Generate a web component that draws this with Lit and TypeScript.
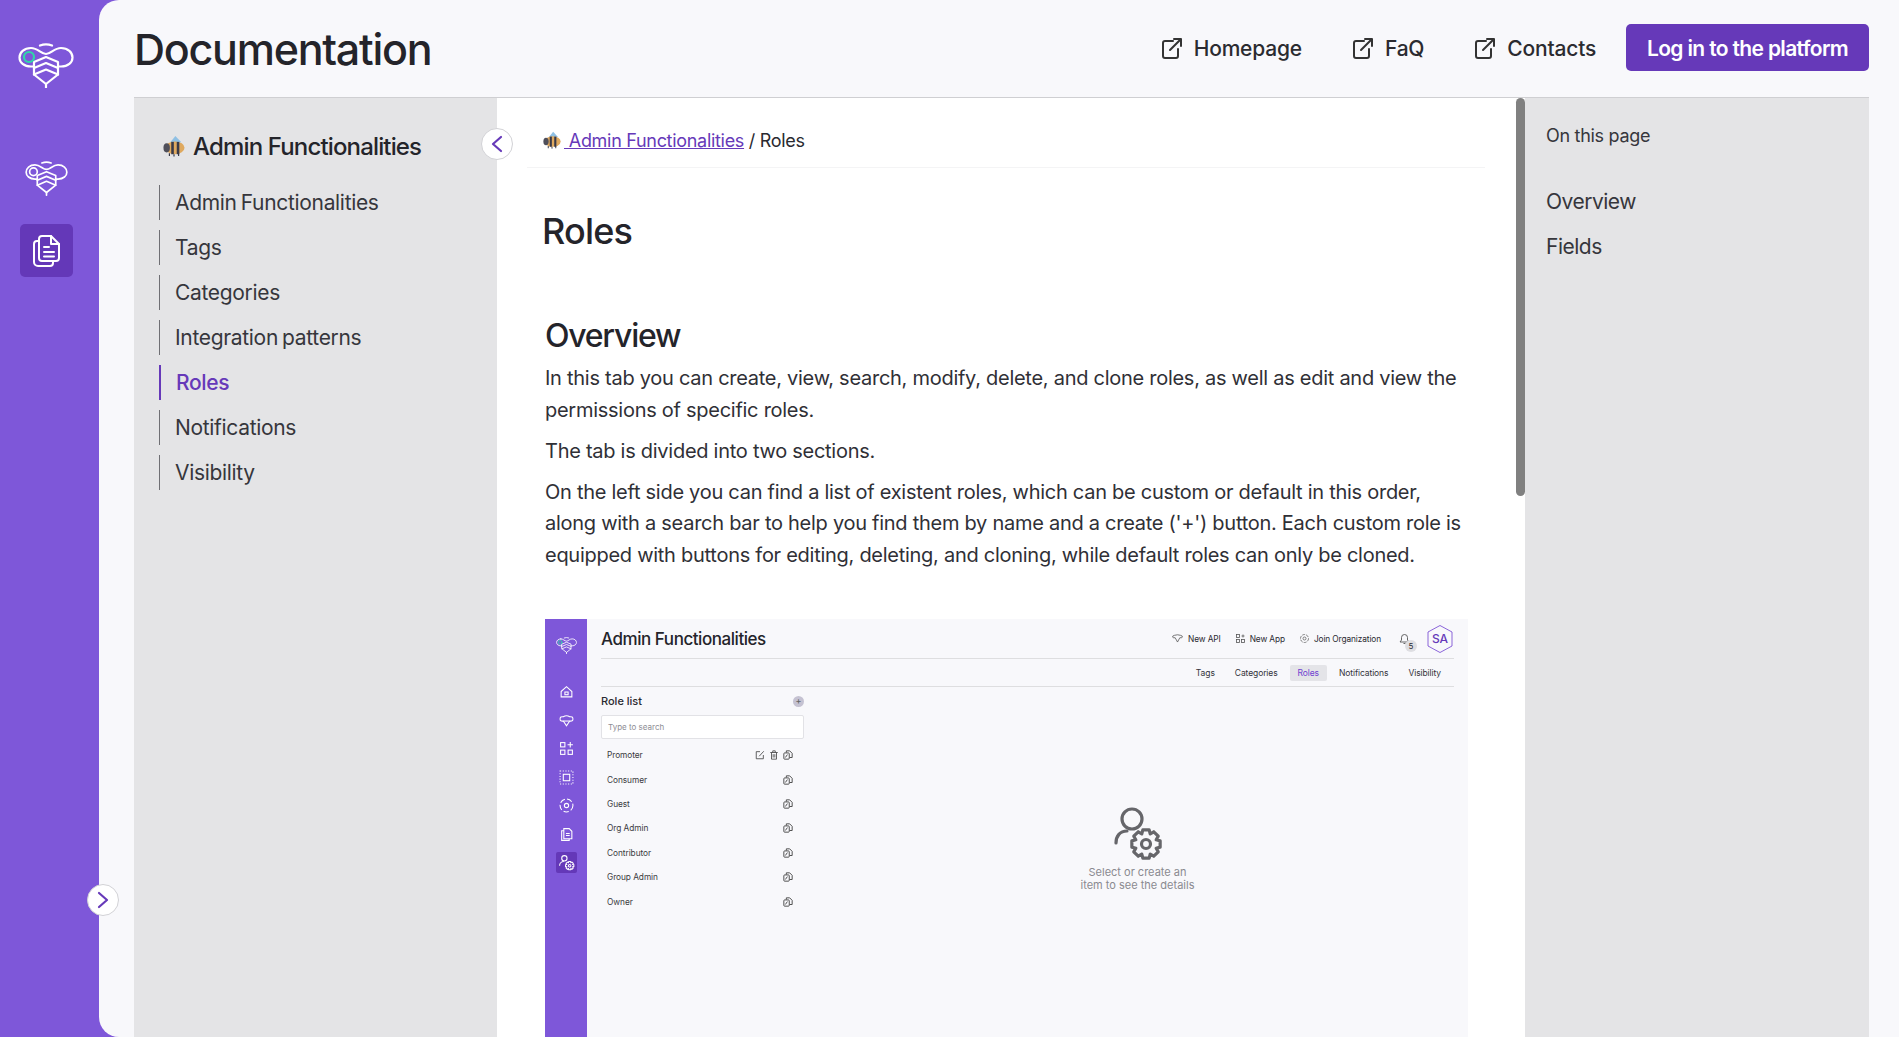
import { LitElement, html, css, svg } from "lit";
import { customElement } from "lit/decorators.js";

const bee = (w: number, eye: string) => html`<svg class="bee" width=${w} viewBox="0 0 56 45" fill="none" stroke="#fff" stroke-width="2.2" stroke-linejoin="round" stroke-linecap="round">
  <path d="M22 2.5Q28 .2 34 2.5" />
  <path d="M13 5C6 5 1.5 9.5 1.5 14.500C1.5 19.500 6 23.500 13 23.500H43C50 23.500 54.500 19.500 54.500 14.500C54.500 9.500 50 5 43 5C36 5 33 11 28 11C23 11 20 5 13 5Z" />
  <path d="M16 19L28 14L40 19V31.500L28 41L16 31.500Z" fill="#7e57d9" />
  <path d="M16 25L28 20L40 25M16 31.500L28 26.500L40 31.500M28 41V44.500" />
  <circle cx="11" cy="14" r="5" stroke=${eye} />
</svg>`;

const ext = html`<svg class="ext" width="24" height="24" viewBox="0 0 24 24" fill="none" stroke="#333" stroke-width="2" stroke-linecap="round" stroke-linejoin="round">
  <path d="M13 5H5a2 2 0 0 0-2 2v13a2 2 0 0 0 2 2h11a2 2 0 0 0 2-2v-7" />
  <path d="M10 14L21 3M14 3h7v7" />
</svg>`;

const beeEmoji = (s: number) => html`<svg width=${s} height=${s} viewBox="0 0 24 24">
  <path d="M8 8L13.500 1L20 8Z" fill="#8fc0e4" />
  <ellipse cx="13" cy="14" rx="10.500" ry="7" fill="#dfa95f" />
  <rect x="9" y="7.500" width="2.800" height="13.500" fill="#3a3a48" />
  <rect x="15" y="7.500" width="2.800" height="13.500" fill="#3a3a48" />
  <ellipse cx="4" cy="14" rx="3.500" ry="5" fill="#4f4f5a" />
  <path d="M7 20v3M12 21v2.500M17 20v3" stroke="#3a3a48" stroke-width="1.300" />
</svg>`;

const copy = html`<svg width="10" height="10" viewBox="0 0 12 12" fill="none" stroke="#444" stroke-width="1.100">
  <rect x="1" y="3.500" width="6.500" height="7.500" rx="1" />
  <path d="M4 3V1h4l3 3v5H8" />
  <path d="M2.800 9l2.500-3.500" />
</svg>`;

// outline of a toothed gear, computed so the teeth stay even
const gearPath = (cx: number, cy: number, outer: number, inner: number, teeth: number) => {
  const pts: string[] = [];
  const step = (Math.PI * 2) / teeth;
  for (let i = 0; i < teeth; i++) {
    const a = i * step - Math.PI / 2;
    [
      [inner, -0.5],
      [outer, -0.28],
      [outer, 0.28],
      [inner, 0.5],
    ].forEach(([r, k]) => {
      const t = a + k * step;
      pts.push(`${(cx + r * Math.cos(t)).toFixed(2)} ${(cy + r * Math.sin(t)).toFixed(2)}`);
    });
  }
  return `M${pts.join("L")}Z`;
};

const miniIcons = [
  svg`<path d="M2 7L7 2.500L12 7V12H2Z" /><rect x="5.500" y="7.500" width="3" height="2.500" />`,
  svg`<path d="M4 3.500Q7 1.500 10 3.500Q13 3 13 5.500Q13 8 10 7.500L7 12L4 7.500Q1 8 1 5.500Q1 3 4 3.500Z" /><path d="M4 7.500h6" />`,
  svg`<rect x="1.500" y="1.500" width="4" height="4" /><rect x="1.500" y="8.500" width="4" height="4" /><rect x="8.500" y="8.500" width="4" height="4" /><path d="M10.500 1v5M8 3.500h5" />`,
  svg`<rect x="1" y="1" width="12" height="12" stroke-dasharray="1 1.500" /><rect x="4" y="4" width="6" height="6" />`,
  svg`<circle cx="7" cy="7" r="6" stroke-dasharray="5 2" /><circle cx="7" cy="7" r="2" />`,
  svg`<path d="M4.500 1.500h5l2.500 2.500v7H4.500Z" /><path d="M4.500 3.500H2.500V12.500H9.500V11" /><path d="M6.500 6h3.500M6.500 8h3.500" />`,
];

const roles = ["Promoter", "Consumer", "Guest", "Org Admin", "Contributor", "Group Admin", "Owner"];
const navItems = ["Admin Functionalities", "Tags", "Categories", "Integration patterns", "Roles", "Notifications", "Visibility"];

@customElement("app-root")
export class AppRoot extends LitElement {
  static styles = css`
    :host {
      display: flex;
      height: 100vh;
      overflow: hidden;
      background: #7e57d9;
      font-family: Inter, "Open Sans", sans-serif;
      color: #2a2a30;
      position: relative;
    }
    .rail {
      width: 99px;
      flex: none;
      display: flex;
      flex-direction: column;
      align-items: center;
      padding-top: 43px;
      box-sizing: border-box;
    }
    .rail .logo { width: 56px; margin-right: 7px; }
    .rail .apis { margin-top: 73px; margin-right: 7px; height: 35px; }
    .rail .docs {
      width: 53px;
      height: 53px;
      margin-top: 28px;
      margin-right: 7px;
      background: #6438b8;
      border-radius: 5px;
      display: flex;
      align-items: center;
      justify-content: center;
    }
    .bee { display: block; }
    .main {
      flex: 1;
      min-width: 0;
      background: #f8f8fb;
      border-radius: 20px 0 0 20px;
      padding: 0 30px 0 35px;
      display: flex;
      flex-direction: column;
    }
    header {
      height: 98px;
      flex: none;
      box-sizing: border-box;
      border-bottom: 1px solid #cfcfd2;
      display: flex;
      align-items: center;
      padding-top: 1px;
    }
    header h1 {
      margin: 0;
      font-size: 43px;
      font-weight: 500;
      letter-spacing: -1.25px;
      flex: 1;
      color: #24242a;
    }
    .link {
      display: flex;
      align-items: center;
      gap: 10px;
      margin-top: -2px;
      font-size: 21px;
      font-weight: 500;
      letter-spacing: -0.2px;
      margin-right: 49px;
      color: #2b2b30;
    }
    .link:nth-of-type(3) { margin-right: 30px; }
    .ext { flex: none; }
    .login {
      width: 243px;
      height: 47px;
      margin-top: -3px;
      padding-top: 1px;
      box-sizing: border-box;
      background: #6639b9;
      color: #fff;
      border-radius: 5px;
      font-size: 21px;
      font-weight: 600;
      letter-spacing: -0.65px;
      display: flex;
      align-items: center;
      justify-content: center;
    }
    .body { flex: 1; display: flex; min-height: 0; }
    .nav {
      width: 363px;
      flex: none;
      background: #e4e4e6;
      padding: 31px 0 0 25px;
      box-sizing: border-box;
    }
    .nav-title {
      display: flex;
      align-items: center;
      gap: 8px;
      font-size: 24px;
      font-weight: 500;
      letter-spacing: -0.85px;
      height: 34px;
      margin-left: 4px;
      margin-bottom: 22px;
      color: #24242a;
    }
    .nav-item {
      height: 35px;
      margin-bottom: 10px;
      border-left: 1px solid #6f6f74;
      padding-left: 15px;
      display: flex;
      align-items: center;
      font-size: 21px;
      letter-spacing: -0.32px;
      word-spacing: -1.500px;
      color: #36363c;
    }
    .nav-item.on {
      border-left: 2px solid #6639b9;
      padding-left: 15px;
      color: #6639b9;
      font-weight: 500;
    }
    .content {
      flex: 1;
      min-width: 0;
      background: #fff;
      padding: 0 31px 0 30px;
      overflow: hidden;
    }
    .crumb {
      height: 70px;
      box-sizing: border-box;
      border-bottom: 1px solid #f4f4f5;
      padding: 15px 0 0 16px;
      display: flex;
      align-items: center;
      font-size: 18px;
      letter-spacing: -0.3px;
      white-space: pre;
    }
    .crumb a {
      color: #6639b9;
      text-decoration: underline;
      display: flex;
      align-items: center;
      gap: 3px;
    }
    .content h2 {
      margin: 41px 0 0 15px;
      font-size: 36px;
      line-height: 44px;
      font-weight: 500;
      letter-spacing: -0.8px;
      color: #24242a;
    }
    .content h3 {
      margin: 63px 0 7px 18px;
      font-size: 32px;
      line-height: 40px;
      font-weight: 500;
      letter-spacing: -1.25px;
      color: #24242a;
    }
    .content p {
      margin: 0 0 9.500px 18px;
      width: 925px;
      font-size: 20px;
      line-height: 31.500px;
      letter-spacing: -0.27px;
      color: #303036;
    }
    .shot {
      margin: 48px 0 0 18px;
      width: 923px;
      height: 520px;
      display: flex;
      background: #f8f8fb;
    }
    .shot-rail {
      width: 42px;
      flex: none;
      background: #7e57d9;
      display: flex;
      flex-direction: column;
      align-items: center;
      padding-top: 16px;
      box-sizing: border-box;
    }
    .shot-rail .mini {
      width: 21px;
      height: 21px;
      margin-bottom: 7.500px;
      display: flex;
      align-items: center;
      justify-content: center;
      border-radius: 2px;
    }
    .shot-rail .first { margin-bottom: 25px; }
    .shot-rail .mini.on { background: #6438b8; }
    .shot-main { flex: 1; min-width: 0; padding: 0 14px; }
    .shot-top {
      height: 39px;
      border-bottom: 1px solid #dedee0;
      display: flex;
      align-items: center;
      font-size: 8.300px;
      letter-spacing: -0.1px;
      gap: 15px;
    }
    .shot-top b {
      flex: 1;
      font-size: 17px;
      font-weight: 500;
      letter-spacing: -0.45px;
      color: #24242a;
    }
    .shot-top span { display: flex; align-items: center; gap: 5px; }
    .bell { position: relative; margin-left: 3px; margin-right: 2px; display: flex; }
    .badge {
      position: absolute;
      left: 6px;
      top: 7px;
      width: 12px;
      height: 12px;
      border-radius: 50%;
      background: #dedee2;
      font-size: 8px;
      display: flex;
      align-items: center;
      justify-content: center;
    }
    .hex { position: relative; width: 26px; height: 28px; margin-right: 1px; }
    .hex i {
      position: absolute;
      inset: 0;
      display: flex;
      align-items: center;
      justify-content: center;
      font-style: normal;
      font-size: 12px;
      font-weight: 500;
      color: #6639b9;
    }
    .tabs {
      height: 28px;
      box-sizing: border-box;
      border-bottom: 1px solid #dedee0;
      display: flex;
      align-items: center;
      justify-content: flex-end;
      padding: 0 13px 0 0;
      font-size: 8.500px;
      letter-spacing: -0.1px;
      color: #33333a;
      gap: 20px;
    }
    .tabs span.on {
      background: #e4e4e8;
      color: #6f3fd0;
      border-radius: 2px;
      padding: 3px 8px;
      margin: 0 -8px;
    }
    .shot-cols { display: flex; }
    .roles { width: 203px; flex: none; }
    .roles-head {
      height: 28px;
      display: flex;
      align-items: center;
      justify-content: space-between;
      font-size: 11px;
      font-weight: 500;
    }
    .plus {
      width: 11px;
      height: 11px;
      border-radius: 50%;
      background: #c5c2d2;
      color: #666;
      font-size: 9px;
      line-height: 10px;
      text-align: center;
    }
    .search {
      height: 24px;
      box-sizing: border-box;
      background: #fff;
      border: 1px solid #e2e2e6;
      border-radius: 2px;
      padding-left: 6px;
      display: flex;
      align-items: center;
      font-size: 8px;
      color: #8d8d94;
      margin-bottom: 4px;
    }
    .role {
      height: 24.400px;
      display: flex;
      align-items: center;
      padding: 0 11px 0 6px;
      gap: 4px;
      font-size: 8.300px;
      letter-spacing: -0.05px;
      color: #3a3a40;
    }
    .role span { flex: 1; }
    .empty {
      flex: 1;
      display: flex;
      flex-direction: column;
      align-items: center;
      padding-top: 120px;
      margin-left: 17px;
      color: #8a8a90;
      font-size: 11px;
      line-height: 12.500px;
      text-align: center;
    }
    .empty svg { margin-bottom: 6px; }
    .scroll {
      width: 9px;
      flex: none;
      background: #fff;
    }
    .scroll div {
      height: 398px;
      background: #808080;
      border-radius: 5px;
    }
    .toc {
      width: 344px;
      flex: none;
      background: #e4e4e6;
      padding: 26px 0 0 21px;
      box-sizing: border-box;
      font-size: 21px;
      letter-spacing: -0.5px;
      color: #36363c;
    }
    .toc small {
      display: block;
      font-size: 18px;
      letter-spacing: -0.3px;
      line-height: 24px;
      margin-bottom: 40px;
    }
    .toc div { height: 45px; line-height: 28px; }
    .chev {
      position: absolute;
      width: 32px;
      height: 32px;
      box-sizing: border-box;
      border-radius: 50%;
      background: #fff;
      border: 1px solid #d2d2d6;
      display: flex;
      align-items: center;
      justify-content: center;
    }
    .chev.open { left: 87px; top: 884px; }
    .chev.close { left: 481px; top: 128px; }
  `;

  render() {
    return html`
      <aside class="rail">
        <div class="logo">${bee(56, "#2fd8a8")}</div>
        <div class="apis">${bee(43, "#fff")}</div>
        <div class="docs">
          <svg width="27" height="32" viewBox="0 0 27 32" fill="none" stroke="#fff" stroke-width="2" stroke-linejoin="round" stroke-linecap="round">
            <path d="M6 6H4a3 3 0 0 0-3 3v18a4 4 0 0 0 4 4h12a3 3 0 0 0 3-3v-2" />
            <path d="M9 1h9l8 8v14a3 3 0 0 1-3 3H9a3 3 0 0 1-3-3V4a3 3 0 0 1 3-3Z" />
            <path d="M18 1v8h8M11 12h5M11 17h10M11 21.500h10" />
          </svg>
        </div>
      </aside>
      <div class="main">
        <header>
          <h1>Documentation</h1>
          <div class="link">${ext}Homepage</div>
          <div class="link">${ext}FaQ</div>
          <div class="link">${ext}Contacts</div>
          <div class="login">Log in to the platform</div>
        </header>
        <div class="body">
          <nav class="nav">
            <div class="nav-title">${beeEmoji(22)}Admin Functionalities</div>
            ${navItems.map((n) => html`<div class="nav-item ${n === "Roles" ? "on" : ""}">${n}</div>`)}
          </nav>
          <main class="content">
            <div class="crumb"><a>${beeEmoji(18)} Admin Functionalities</a> / Roles</div>
            <h2>Roles</h2>
            <h3>Overview</h3>
            <p>In this tab you can create, view, search, modify, delete, and clone roles, as well as edit and view the permissions of specific roles.</p>
            <p>The tab is divided into two sections.</p>
            <p>On the left side you can find a list of existent roles, which can be custom or default in this order, along with a search bar to help you find them by name and a create ('+') button. Each custom role is equipped with buttons for editing, deleting, and cloning, while default roles can only be cloned.</p>
            ${this.renderShot()}
          </main>
          <div class="scroll"><div></div></div>
          <aside class="toc">
            <small>On this page</small>
            <div>Overview</div>
            <div>Fields</div>
          </aside>
        </div>
      </div>
      <div class="chev open">
        <svg width="14" height="18" viewBox="0 0 14 18" fill="none" stroke="#6639b9" stroke-width="2.200" stroke-linecap="round" stroke-linejoin="round"><path d="M3 2l8 7-8 7" /></svg>
      </div>
      <div class="chev close">
        <svg width="14" height="18" viewBox="0 0 14 18" fill="none" stroke="#6639b9" stroke-width="2.200" stroke-linecap="round" stroke-linejoin="round"><path d="M11 2l-8 7 8 7" /></svg>
      </div>
    `;
  }

  renderShot() {
    return html`<div class="shot">
      <div class="shot-rail">
        <div class="mini first">${bee(23, "#2fd8a8")}</div>
        ${miniIcons.map((i) => html`<div class="mini">
          <svg width="15" height="15" viewBox="0 0 14 14" fill="none" stroke="#fff" stroke-width="1">${i}</svg>
        </div>`)}
        <div class="mini on">
          <svg width="17" height="17" viewBox="0 0 16 16" fill="none" stroke="#fff" stroke-width="1"><circle cx="6" cy="4" r="2.500" /><path d="M1.500 11c0-2.500 2-4 4-4" /><path d=${gearPath(11, 11, 4, 3, 8)} /><circle cx="11" cy="11" r="1.200" /></svg>
        </div>
      </div>
      <div class="shot-main">
        <div class="shot-top">
          <b>Admin Functionalities</b>
          <span><svg width="11" height="9" viewBox="0 0 14 11" fill="none" stroke="#555" stroke-width="1"><path d="M3 1.500Q7 0 11 1.500Q14 2 13 4Q12 5 10 4.500L7 10L4 4.500Q2 5 1 4Q0 2 3 1.500Z" /></svg>New API</span>
          <span><svg width="9" height="9" viewBox="0 0 9 9" fill="none" stroke="#555" stroke-width=".8"><rect x=".5" y=".5" width="3" height="3" /><rect x=".5" y="5.500" width="3" height="3" /><rect x="5.500" y="5.500" width="3" height="3" /><path d="M7 .5v3M5.500 2h3" /></svg>New App</span>
          <span><svg width="9" height="9" viewBox="0 0 9 9" fill="none" stroke="#555" stroke-width=".7"><circle cx="4.500" cy="4.500" r="4" stroke-dasharray="3 1" /><circle cx="4.500" cy="4.500" r="1.500" /></svg>Join Organization</span>
          <div class="bell">
            <svg width="11" height="12" viewBox="0 0 11 12" fill="none" stroke="#555" stroke-width=".9"><path d="M5.500 1.500A3 3 0 0 1 8.500 4.500V7L10 9H1L2.500 7V4.500A3 3 0 0 1 5.500 1.500ZM4.500 10.500h2" /></svg>
            <div class="badge">5</div>
          </div>
          <div class="hex">
            <svg width="26" height="28" viewBox="0 0 26 28" fill="none" stroke="#6f3fd0" stroke-width=".8"><path d="M13 .5L25 7V21L13 27.500L1 21V7Z" /></svg>
            <i>SA</i>
          </div>
        </div>
        <div class="tabs">
          <span>Tags</span><span>Categories</span><span class="on">Roles</span><span>Notifications</span><span>Visibility</span>
        </div>
        <div class="shot-cols">
          <div class="roles">
            <div class="roles-head">Role list<div class="plus">+</div></div>
            <div class="search">Type to search</div>
            ${roles.map((r, i) => html`<div class="role">
              <span>${r}</span>
              ${i === 0
                ? html`<svg width="10" height="10" viewBox="0 0 12 12" fill="none" stroke="#444" stroke-width="1"><path d="M6 2H1.500v8.500H10V6M5 7.500L10.500 1.500" /></svg>
                    <svg width="10" height="10" viewBox="0 0 12 12" fill="none" stroke="#444" stroke-width="1"><path d="M1.500 3h9M3 3v8h6V3M4.500 3V1h3v2M5 5v4M7 5v4" /></svg>`
                : ""}
              ${copy}
            </div>`)}
          </div>
          <div class="empty">
            <svg width="48" height="53" viewBox="0 0 48 53" fill="none" stroke="#66666a" stroke-width="3.200" stroke-linecap="round" stroke-linejoin="round">
              <circle cx="18" cy="12" r="10" />
              <path d="M2 36c0-7 4-12 11-12" />
              <path d=${gearPath(32, 37, 14.500, 11, 8)} />
              <circle cx="32" cy="37" r="4.500" />
            </svg>
            Select or create an<br />item to see the details
          </div>
        </div>
      </div>
    </div>`;
  }
}
